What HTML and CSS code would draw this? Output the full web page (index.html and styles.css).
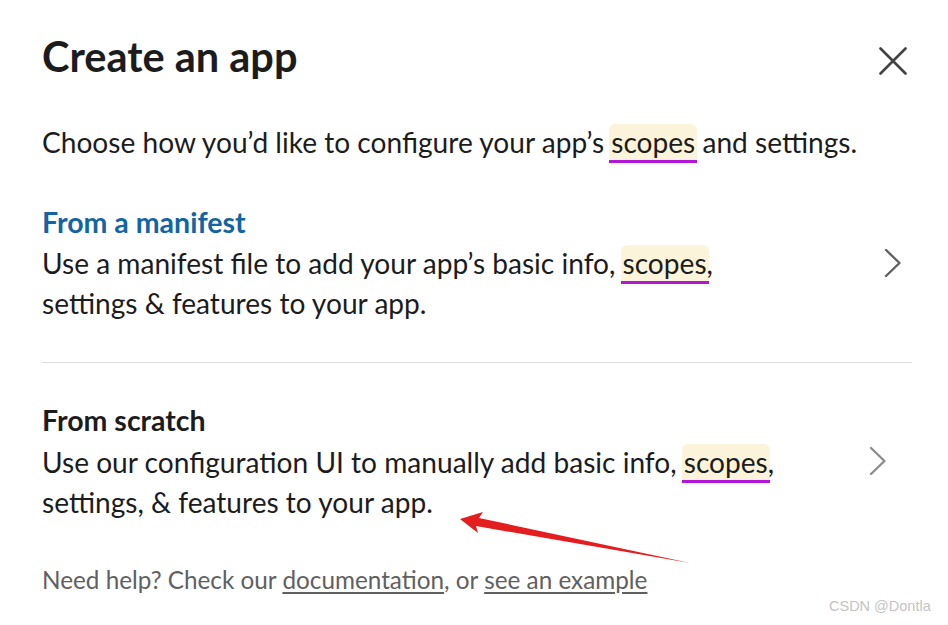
FILE: index.html
```html
<!DOCTYPE html>
<html>
<head>
<meta charset="utf-8">
<link rel="stylesheet" href="styles.css">
</head>
<body>
<div class="modal">
  <div class="header">
    <h1 class="title">Create an app</h1>
    <button class="close" aria-label="Close">
      <svg width="28" height="28" viewBox="0 0 28 28"><path d="M1.5 1.5 L26.5 26.5 M26.5 1.5 L1.5 26.5" stroke="#454245" stroke-width="2.6" stroke-linecap="round" fill="none"/></svg>
    </button>
  </div>
  <p class="intro">Choose how you’d like to configure your app’s <span class="scope">scopes</span> and settings.</p>
  <div class="option first">
    <div class="opt-text">
      <div class="opt-title blue">From a manifest</div>
      <div class="opt-desc">Use a manifest file to add your app’s basic info, <span class="scope">scopes</span>,<br>settings &amp; features to your app.</div>
    </div>
    <svg class="chev dark" width="18" height="30" viewBox="0 0 18 30"><path d="M2 2 L15.5 15 L2 28" stroke="currentColor" stroke-width="2.4" fill="none" stroke-linecap="round" stroke-linejoin="round"/></svg>
  </div>
  <div class="divider"></div>
  <div class="option second">
    <div class="opt-text">
      <div class="opt-title">From scratch</div>
      <div class="opt-desc">Use our configuration UI to manually add basic info, <span class="scope">scopes</span>,<br>settings, &amp; features to your app.</div>
    </div>
    <svg class="chev light" width="18" height="30" viewBox="0 0 18 30"><path d="M2 2 L15.5 15 L2 28" stroke="currentColor" stroke-width="2.4" fill="none" stroke-linecap="round" stroke-linejoin="round"/></svg>
  </div>
  <p class="help">Need help? Check our <a href="#">documentation</a>, or <a href="#">see an example</a></p>
</div>
<svg class="arrow" width="948" height="625" viewBox="0 0 948 625"><polygon points="460,519 483,512 479,518 690,563 476,526 478,533" fill="#e41e1e"/></svg>
<div class="watermark">CSDN @Dontla</div>
</body>
</html>
```
FILE: styles.css
```css
html, body {
  margin: 0;
  padding: 0;
  background: #ffffff;
}
body {
  width: 948px;
  height: 625px;
  overflow: hidden;
  position: relative;
  font-family: Lato, "Open Sans", sans-serif;
  color: #1d1c1d;
}
.modal {
  padding: 34px 36px 0 42px;
}
.header {
  display: flex;
  justify-content: space-between;
  align-items: flex-start;
}
.title {
  margin: 0;
  font-size: 41.5px;
  line-height: 44px;
  font-weight: 700;
  color: #1d1c1d;
}
.close {
  border: 0;
  background: none;
  padding: 0;
  margin: 13px 5px 0 0;
  width: 28px;
  height: 28px;
  display: block;
}
.intro {
  margin: 44px 0 0 0;
  font-size: 28.1px;
  line-height: 40px;
}
.scope {
  background: #fcf4da;
  border-bottom: 3px solid #b316d6;
  border-radius: 6px 6px 0 0;
  padding: 1px 2px 1px 2px;
  margin: 0 -2px;
}
.option {
  display: flex;
  align-items: center;
  justify-content: space-between;
}
.option.first {
  margin-top: 40px;
  padding: 0 10px 39px 0;
}
.option.second {
  padding: 37px 25px 0 0;
}
.opt-title {
  font-size: 28.5px;
  line-height: 40px;
  font-weight: 700;
}
.opt-title.blue {
  color: #1264a3;
}
.opt-desc {
  margin-top: 1px;
  font-size: 28.1px;
  line-height: 40px;
}
.second .opt-desc {
  margin-top: 2px;
}
.chev {
  display: block;
}
.chev.dark {
  color: #616061;
}
.chev.light {
  color: #8d8d8d;
}
.divider {
  height: 1px;
  background: #dddddd;
}
.help {
  margin: 42px 0 0 0;
  font-size: 24.3px;
  line-height: 32px;
  color: #616061;
}
.help a {
  color: #616061;
  text-decoration: underline;
  text-underline-offset: 3px;
}
.arrow {
  position: absolute;
  left: 0;
  top: 0;
  pointer-events: none;
}
.watermark {
  position: absolute;
  left: 829px;
  top: 598px;
  font-family: "Liberation Sans", Arial, sans-serif;
  font-size: 14.5px;
  color: #c4c4c4;
}
```
